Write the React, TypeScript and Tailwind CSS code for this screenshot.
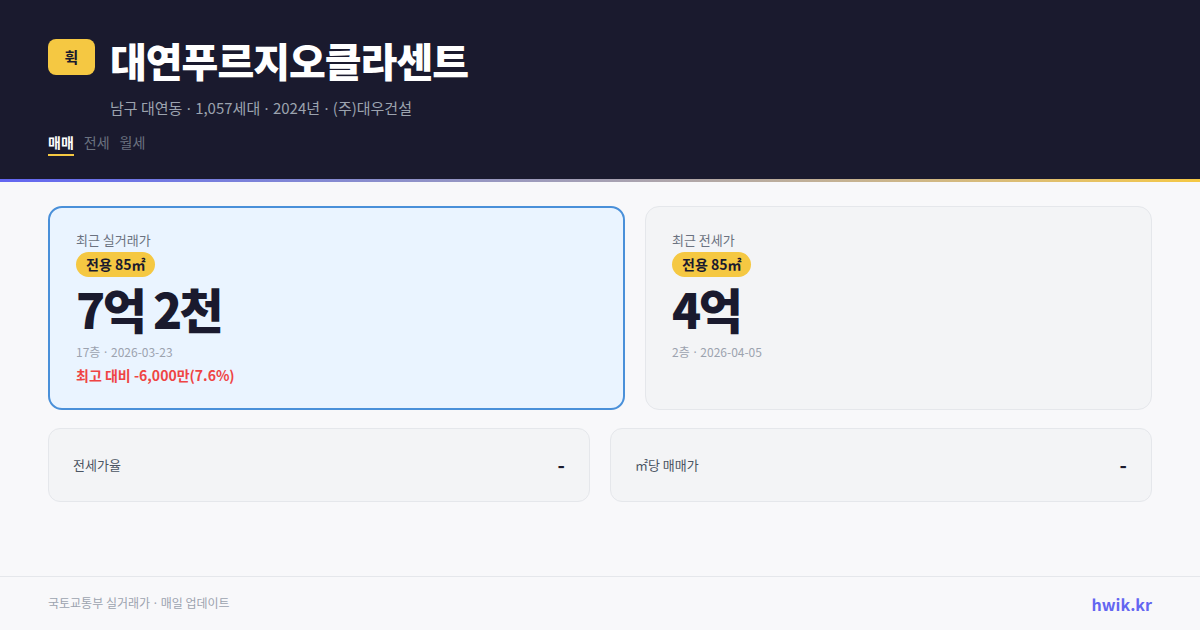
const Dot = () => (
  <span className="mx-[1px]" style={{ fontFamily: '"Noto Sans", sans-serif' }}>
    ·
  </span>
)

export default function App() {
  return (
    <div
      className="w-[1200px] h-[630px] flex flex-col bg-[#f8f8fa] overflow-hidden"
      style={{ fontFamily: '"Noto Sans CJK KR", "Noto Sans", sans-serif' }}
    >
      {/* Header */}
      <header className="bg-[#1a1a2e] px-12 pt-[36px] h-[179px]">
        <div className="flex items-start gap-[15px]">
          <div className="mt-[3px] w-[47px] h-[36px] rounded-lg bg-[#f5c842] flex items-center justify-center text-[15px] font-bold text-[#1a1a2e]">
            휙
          </div>
          <h1 className="text-[40px] leading-[48px] font-black text-white tracking-[-1px]">대연푸르지오클라센트</h1>
        </div>
        <p className="ml-[62px] mt-[13px] text-[15px] leading-[22px] text-[#9ca3af]">
          남구 대연동 <Dot /> 1,057세대 <Dot /> 2024년 <Dot /> (주)대우건설
        </p>
        <nav className="mt-[13px] flex gap-[10px] text-[14px] leading-[20px]">
          <span className="font-bold text-white border-b-2 border-[#f5c842] pb-[2px]">매매</span>
          <span className="text-[#6b7280]">전세</span>
          <span className="text-[#6b7280]">월세</span>
        </nav>
      </header>
      <div className="h-[3px] bg-gradient-to-r from-[#6366f1] to-[#f5c842]" />

      {/* Main */}
      <main className="flex-1 px-12 pt-6">
        <div className="flex gap-5">
          <div className="w-[577px] h-[204px] rounded-[14px] border-2 border-[#4a90d9] bg-[#eaf4ff] px-[26px] pt-[23px]">
            <PriceBlock label="최근 실거래가" price="7억 2천" meta="17층" date="2026-03-23" />
            <p className="mt-[4px] text-[14px] leading-[20px] font-semibold text-[#ef4444]">최고 대비 -6,000만(7.6%)</p>
          </div>
          <div className="flex-1 h-[204px] rounded-[14px] border border-[#e5e7eb] bg-[#f3f4f6] px-[26px] pt-[24px]">
            <PriceBlock label="최근 전세가" price="4억" meta="2층" date="2026-04-05" />
          </div>
        </div>
        <div className="mt-[18px] grid grid-cols-2 gap-5">
          <StatCard label="전세가율" value="-" />
          <StatCard label="㎡당 매매가" value="-" />
        </div>
      </main>

      {/* Footer */}
      <footer className="h-[54px] border-t border-[#e5e7eb] px-12 flex items-center justify-between">
        <span className="text-[12px] text-[#9ca3af]">국토교통부 실거래가 <Dot /> 매일 업데이트</span>
        <span className="text-[16px] font-bold text-[#6366f1]">hwik.kr</span>
      </footer>
    </div>
  )
}

function PriceBlock({ label, price, meta, date }: { label: string; price: string; meta: string; date: string }) {
  return (
    <div>
      <p className="text-[13px] leading-[18px] text-[#6b7280]">{label}</p>
      <span className="mt-[3px] inline-block rounded-full bg-[#f5c842] px-[10px] text-[14px] leading-[25px] font-bold text-[#1a1a2e]">
        전용 85㎡
      </span>
      <div className="mt-[2px] text-[48px] leading-[58px] font-black text-[#1a1a2e] tracking-[-2.5px]">{price}</div>
      <p className="mt-[6px] text-[12px] leading-[17px] text-[#9ca3af]">
        {meta} <Dot /> {date}
      </p>
    </div>
  )
}

function StatCard({ label, value }: { label: string; value: string }) {
  return (
    <div className="h-[74px] rounded-[12px] border border-[#e5e7eb] bg-[#f3f4f6] px-6 flex items-center justify-between">
      <span className="text-[13px] text-[#4b5563]">{label}</span>
      <span className="text-[20px] font-bold text-[#1a1a2e]">{value}</span>
    </div>
  )
}
